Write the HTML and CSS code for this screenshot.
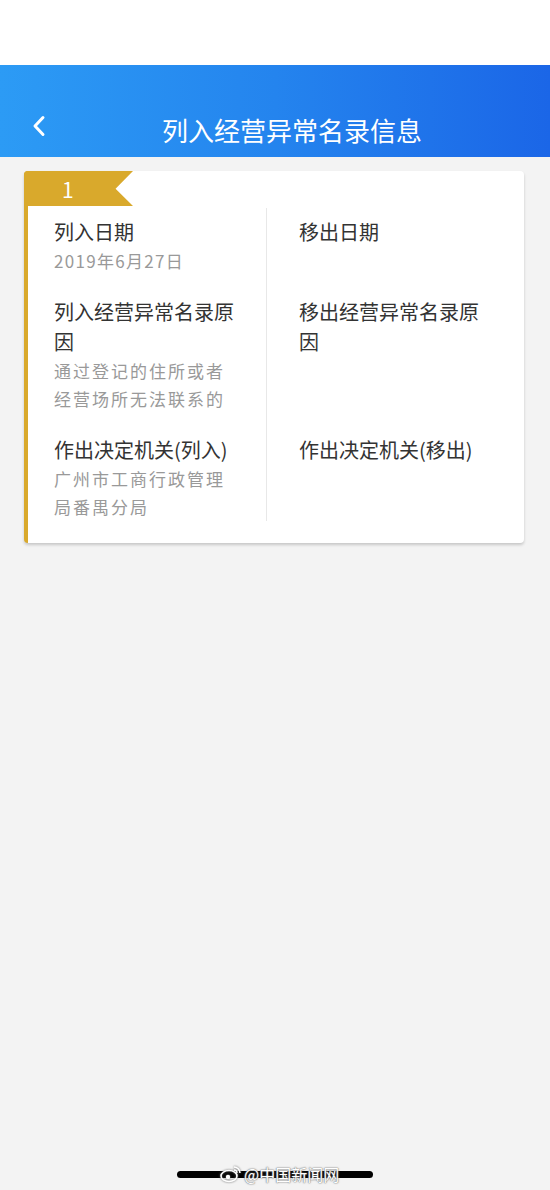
FILE: index.html
```html
<!DOCTYPE html>
<html lang="zh-CN">
<head>
    <meta charset="UTF-8">
    <meta name="viewport" content="width=device-width, initial-scale=1.0">
    <title>列入经营异常名录信息</title>
    <link rel="stylesheet" href="styles.css">
</head>
<body>
<div class="page">
    <!-- status bar area -->
    <div class="status"></div>

    <!-- Top Navigation Bar -->
    <div class="header">
        <a class="back" href="#">
            <svg width="14" height="22" viewBox="0 0 14 22">
                <polyline points="11,2.5 3,11 11,19.5" fill="none" stroke="#fff" stroke-width="3" stroke-linecap="round" stroke-linejoin="round"/>
            </svg>
        </a>
        <h1>列入经营异常名录信息</h1>
        <span></span>
    </div>

    <div class="content">
        <div class="card">
            <div class="badge">1</div>
            <div class="grid">
                <div class="cell left first">
                    <div class="label">列入日期</div>
                    <div class="value date">2019年6月27日</div>
                </div>
                <div class="cell first">
                    <div class="label">移出日期</div>
                </div>
                <div class="cell left">
                    <div class="label">列入经营异常名录原因</div>
                    <div class="value">通过登记的住所或者经营场所无法联系的</div>
                </div>
                <div class="cell">
                    <div class="label">移出经营异常名录原因</div>
                </div>
                <div class="cell left last">
                    <div class="label">作出决定机关(列入)</div>
                    <div class="value">广州市工商行政管理局番禺分局</div>
                </div>
                <div class="cell last">
                    <div class="label">作出决定机关(移出)</div>
                </div>
            </div>
        </div>
    </div>

    <!-- home indicator -->
    <div class="footer">
        <div class="home-bar"></div>
        <div class="watermark">
            <svg width="22" height="18" viewBox="0 0 22 18">
                <ellipse cx="9" cy="11" rx="8" ry="5.5" fill="none" stroke="#fff" stroke-width="1.6"/>
                <circle cx="8" cy="12" r="2.2" fill="#fff"/>
                <path d="M14 2 a6 6 0 0 1 6 6" fill="none" stroke="#fff" stroke-width="1.6"/>
                <path d="M14 5 a3 3 0 0 1 3 3" fill="none" stroke="#fff" stroke-width="1.4"/>
            </svg>
            <span>@中国新闻网</span>
        </div>
    </div>
</div>
</body>
</html>
```

FILE: styles.css
```css
body {
    margin: 0;
    font-family: "Noto Sans CJK SC", "Noto Sans", sans-serif;
    background-color: #f3f3f3;
}
.page {
    height: 1190px;
    display: flex;
    flex-direction: column;
    position: relative;
}
.status {
    height: 65px;
    background-color: #fff;
}
.header {
    height: 92px;
    box-sizing: border-box;
    padding-top: 47px;
    display: grid;
    grid-template-columns: 94px 1fr 60px;
    background: linear-gradient(90deg, #2c9bf5 0%, #2484ee 50%, #1b66e7 100%);
}
.back {
    align-self: start;
    margin-top: 3px;
    padding-left: 32px;
    display: block;
    height: 22px;
}
.header h1 {
    margin: 0;
    font-size: 26px;
    font-weight: normal;
    line-height: 36px;
    color: #fff;
    text-align: center;
}
.content {
    padding: 14px 26px 0 24px;
}
.card {
    background-color: #fff;
    border-left: 4px solid #d9a92c;
    border-radius: 4px;
    padding-bottom: 22px;
    box-shadow: 0 2px 3px rgba(0, 0, 0, 0.18);
}
.badge {
    width: 109px;
    height: 35px;
    margin-left: -4px;
    box-sizing: border-box;
    padding-left: 38px;
    background-color: #d9a92c;
    border-top-left-radius: 4px;
    clip-path: polygon(0 0, 100% 0, 84% 51%, 100% 100%, 0 100%);
    color: #fff;
    font-size: 21px;
    line-height: 36px;
}
.grid {
    margin-top: 2px;
    display: grid;
    grid-template-columns: 239px 1fr;
}
.cell {
    padding: 0 40px 22px 32px;
}
.cell.left {
    padding: 0 28px 22px 26px;
    border-right: 1px solid #e8e8e8;
}
.cell.first {
    padding-top: 9px;
}
.cell.last {
    padding-bottom: 0;
}
.label {
    font-size: 20px;
    line-height: 30px;
    color: #333;
}
.value {
    font-size: 17px;
    line-height: 28px;
    letter-spacing: 2px;
    color: #999;
}
.value.date {
    letter-spacing: 1.3px;
}
.footer {
    margin-top: auto;
    padding-bottom: 12px;
    display: flex;
    justify-content: center;
}
.home-bar {
    width: 196px;
    height: 7px;
    border-radius: 4px;
    background-color: #000;
}
.watermark {
    position: absolute;
    left: 220px;
    bottom: 4px;
    display: flex;
    align-items: center;
    gap: 2px;
    color: #fff;
    font-size: 16px;
    line-height: 24px;
    text-shadow: 0 0 2px #777, 0 0 1px #555;
}
.watermark svg {
    filter: drop-shadow(0 0 1px #666);
}
```
